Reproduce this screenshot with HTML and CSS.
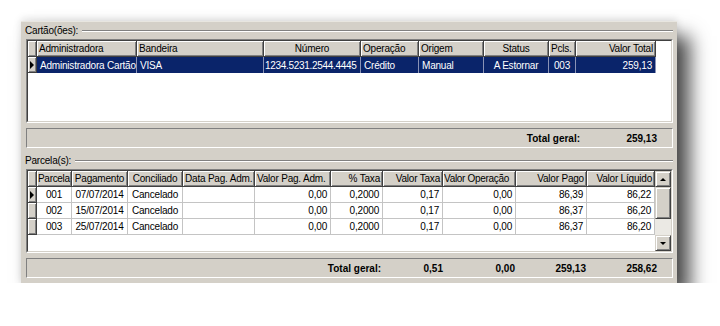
FILE: index.html
```html
<!DOCTYPE html>
<html lang="pt-BR">
<head>
  <meta charset="UTF-8" />
  <meta name="viewport" content="width=device-width, initial-scale=1.0" />
  <title>Cartões e Parcelas</title>
  <link rel="stylesheet" href="styles.css">
</head>
<body>

  <div class="window">

    <!-- Cartões -->
    <div class="group-title"><span>Cartão(ões):</span><i class="etch"></i></div>
    <div class="grid grid-cards">
      <div class="grid-in">
        <table class="tbl">
          <colgroup>
            <col style="width:9px"><col style="width:100px"><col style="width:127px"><col style="width:97px">
            <col style="width:58px"><col style="width:65px"><col style="width:65px"><col style="width:27px"><col style="width:80px">
          </colgroup>
          <tr class="head">
            <th class="ind"></th>
            <th>Administradora</th>
            <th>Bandeira</th>
            <th class="c">Número</th>
            <th>Operação</th>
            <th>Origem</th>
            <th class="c">Status</th>
            <th>Pcls.</th>
            <th class="r">Valor Total</th>
          </tr>
          <tr class="sel">
            <td class="ind"><b class="arrow"></b></td>
            <td>Administradora Cartão</td>
            <td>VISA</td>
            <td class="tight">1234.5231.2544.4445</td>
            <td>Crédito</td>
            <td>Manual</td>
            <td class="c">A Estornar</td>
            <td class="c">003</td>
            <td class="r">259,13</td>
          </tr>
        </table>
      </div>
    </div>
    <div class="totals">
      <span class="tot-gap" style="width:473px"></span>
      <span class="tot-cell" style="width:82px">Total geral:</span>
      <span class="tot-cell" style="width:77px">259,13</span>
    </div>

    <!-- Parcelas -->
    <div class="group-title second"><span>Parcela(s):</span><i class="etch"></i></div>
    <div class="grid grid-parcels">
      <div class="grid-in">
        <table class="tbl">
          <colgroup>
            <col style="width:9px"><col style="width:35px"><col style="width:56px"><col style="width:55px">
            <col style="width:72px"><col style="width:76px"><col style="width:52px"><col style="width:60px">
            <col style="width:73px"><col style="width:71px"><col style="width:68px">
          </colgroup>
          <tr class="head">
            <th class="ind"></th>
            <th class="tight">Parcela</th>
            <th class="c">Pagamento</th>
            <th class="c">Conciliado</th>
            <th>Data Pag. Adm.</th>
            <th>Valor Pag. Adm.</th>
            <th class="r">% Taxa</th>
            <th class="r">Valor Taxa</th>
            <th class="tight">Valor Operação</th>
            <th class="r">Valor Pago</th>
            <th class="r">Valor Líquido</th>
          </tr>
          <tr>
            <td class="ind btn"><b class="arrow"></b></td>
            <td class="c">001</td><td class="c">07/07/2014</td><td class="c">Cancelado</td><td></td>
            <td class="r">0,00</td><td class="r">0,2000</td><td class="r">0,17</td><td class="r">0,00</td>
            <td class="r">86,39</td><td class="r">86,22</td>
          </tr>
          <tr>
            <td class="ind btn"></td>
            <td class="c">002</td><td class="c">15/07/2014</td><td class="c">Cancelado</td><td></td>
            <td class="r">0,00</td><td class="r">0,2000</td><td class="r">0,17</td><td class="r">0,00</td>
            <td class="r">86,37</td><td class="r">86,20</td>
          </tr>
          <tr>
            <td class="ind btn"></td>
            <td class="c">003</td><td class="c">25/07/2014</td><td class="c">Cancelado</td><td></td>
            <td class="r">0,00</td><td class="r">0,2000</td><td class="r">0,17</td><td class="r">0,00</td>
            <td class="r">86,37</td><td class="r">86,20</td>
          </tr>
        </table>
        <div class="scrollbar">
          <div class="sb-btn"><b class="up"></b></div>
          <div class="sb-thumb"></div>
          <div class="sb-track"></div>
          <div class="sb-btn"><b class="down"></b></div>
        </div>
      </div>
    </div>
    <div class="totals">
      <span class="tot-gap" style="width:276px"></span>
      <span class="tot-cell" style="width:80px">Total geral:</span>
      <span class="tot-cell" style="width:62px">0,51</span>
      <span class="tot-cell" style="width:72px">0,00</span>
      <span class="tot-cell" style="width:71px">259,13</span>
      <span class="tot-cell" style="width:71px">258,62</span>
    </div>

  </div>

</body>
</html>
```

FILE: styles.css
```css
body {
  margin: 0;
  background-color: #fff;
  font-family: 'Liberation Sans', Arial, sans-serif;
  font-size: 10px;
  letter-spacing: -0.2px;
  color: #000;
}

.window {
  margin: 21px 0 0 21px;
  width: 656px;
  height: 262px;
  box-sizing: border-box;
  padding: 0 4px 0 5px;
  background-color: #d4d0c8;
  border-top: 1px solid #e8e6e0;
  box-shadow: 13px 15px 18px rgba(0, 0, 0, 0.7), 0 -2px 8px rgba(0, 0, 0, 0.12);
}

/* group box caption with the etched line */
.group-title {
  display: flex;
  align-items: center;
  height: 17px;
  margin-left: -1px;
  color: #000;
}
.group-title.second {
  margin-top: 4px;
}
.group-title .etch {
  flex: 1;
  height: 0;
  margin-left: 4px;
  border-top: 1px solid #808080;
  border-bottom: 1px solid #fff;
}

/* sunken grid */
.grid {
  background-color: #fff;
  border: 1px solid;
  border-color: #808080 #fff #fff #808080;
  box-sizing: border-box;
  height: 84px;
}
.grid-in {
  height: 100%;
  box-sizing: border-box;
  border: 1px solid;
  border-color: #404040 #d4d0c8 #d4d0c8 #404040;
  display: flex;
  align-items: flex-start;
}

.tbl {
  table-layout: fixed;
  border-collapse: separate;
  border-spacing: 0;
  width: 628px;
}
.grid-parcels .tbl {
  width: 627px;
}
.tbl th,
.tbl td {
  height: 16px;
  padding: 0 3px;
  box-sizing: border-box;
  line-height: 15px;
  white-space: nowrap;
  overflow: hidden;
  text-align: left;
  font-weight: normal;
}
.tbl th {
  background-color: #d4d0c8;
  border-right: 1px solid #404040;
  border-bottom: 1px solid #404040;
  box-shadow: inset 1px 1px #fff, inset -1px -1px #808080;
  padding: 0 2px;
}
.tbl td {
  border-right: 1px solid #c4c4c4;
  border-bottom: 1px solid #c4c4c4;
}
.tbl .tight {
  padding: 0 1px;
  letter-spacing: -0.3px;
}
.tbl .c { text-align: center; }
.tbl .r { text-align: right; }

.tbl tr.sel td {
  background-color: #0a246a;
  color: #fff;
  border-right-color: #8a93b6;
  border-bottom: none;
}

.tbl .ind,
.tbl tr.sel td.ind,
.tbl td.btn {
  padding: 0;
  background-color: #d4d0c8;
  border-right: 1px solid #404040;
  border-bottom: 1px solid #404040;
  box-shadow: inset 1px 1px #fff, inset -1px -1px #808080;
}

.arrow {
  display: block;
  width: 0;
  height: 0;
  margin-left: 2px;
  border-top: 4px solid transparent;
  border-bottom: 4px solid transparent;
  border-left: 4px solid #000;
}

/* vertical scrollbar */
.scrollbar {
  margin-left: auto;
  width: 16px;
  height: 100%;
  display: flex;
  flex-direction: column;
  background-color: #ebe9e4;
}
.sb-btn,
.sb-thumb {
  box-sizing: border-box;
  background-color: #d4d0c8;
  border: 1px solid;
  border-color: #d4d0c8 #404040 #404040 #d4d0c8;
  box-shadow: inset 1px 1px #fff, inset -1px -1px #808080;
}
.sb-btn {
  height: 16px;
  display: flex;
  align-items: center;
  justify-content: center;
}
.sb-thumb {
  height: 32px;
}
.sb-track {
  flex: 1;
}
.up,
.down {
  width: 0;
  height: 0;
  border-left: 3px solid transparent;
  border-right: 3px solid transparent;
}
.up { border-bottom: 3px solid #000; }
.down { border-top: 3px solid #000; }

/* totals bar */
.totals {
  display: flex;
  align-items: center;
  margin-top: 5px;
  height: 20px;
  box-sizing: border-box;
  border: 1px solid;
  border-color: #808080 #fff #fff #808080;
  font-weight: bold;
  letter-spacing: 0;
}
.tot-gap {
  flex: none;
}
.tot-cell {
  flex: none;
  box-sizing: border-box;
  padding-right: 2px;
  text-align: right;
}
```
